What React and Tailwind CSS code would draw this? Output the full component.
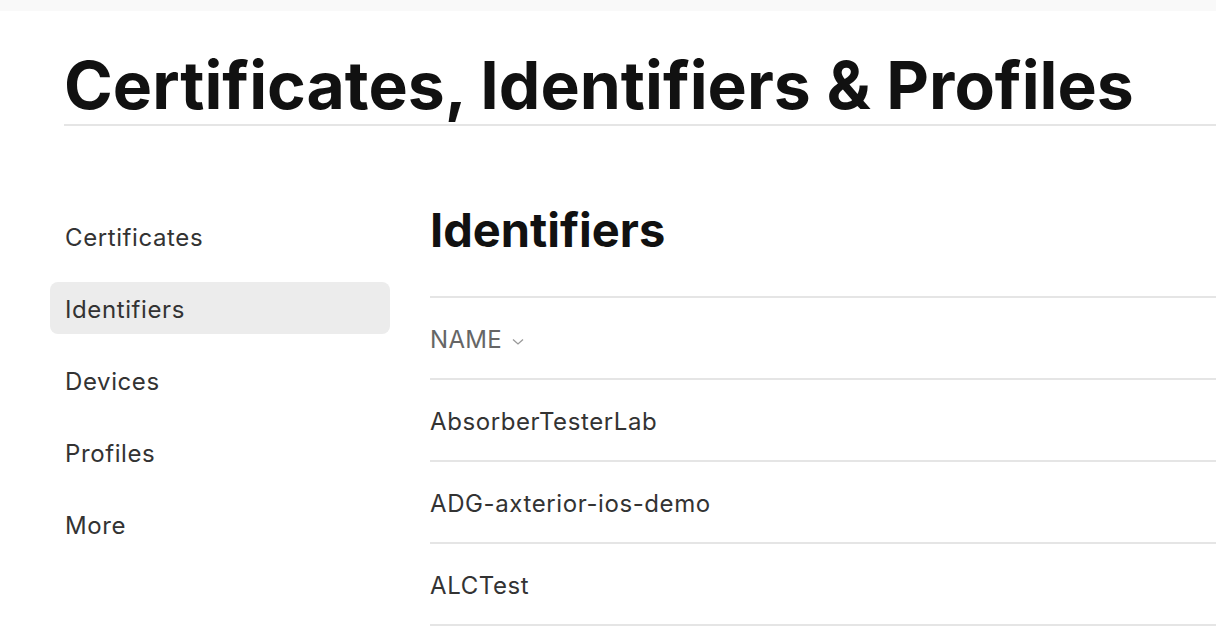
export default function App() {
  const items = ["Certificates", "Identifiers", "Devices", "Profiles", "More"];
  const rows = ["AbsorberTesterLab", "ADG-axterior-ios-demo", "ALCTest"];
  return (
    <div className="w-[1216px] h-[630px] overflow-hidden bg-white" style={{ fontFamily: "Inter, 'Noto Sans', sans-serif" }}>
      <div className="h-[11px] bg-[#f9f9f9]" />
      <div className="pl-[64px]">
        <h1 className="pt-[36px] text-[66px] leading-[76px] font-bold text-[#111] tracking-[0px] whitespace-nowrap">
          Certificates, Identifiers &amp; Profiles
        </h1>
        <div className="h-[2px] bg-[#e5e5e5] mt-[1px]" />
      </div>
      <div className="flex mt-[84px]">
        <nav className="w-[340px] ml-[50px] flex flex-col gap-[20px] shrink-0">
          {items.map((it) => (
            <div
              key={it}
              className={`h-[52px] rounded-[8px] px-[15px] pt-[4px] flex items-center text-[24px] tracking-[0.6px] text-[#333] ${it === "Identifiers" ? "bg-[#ececec]" : ""}`}
            >
              {it}
            </div>
          ))}
        </nav>
        <main className="ml-[40px] flex-1 -mt-[10px]">
          <h2 className="text-[47px] leading-[60px] font-bold text-[#111] tracking-[0px]">Identifiers</h2>
          <div className="mt-[36px] h-[2px] bg-[#e5e5e5]" />
          <div className="h-[80px] pt-[4px] flex items-center gap-[10px] text-[24px] tracking-[0.3px] text-[#666]">
            <span>NAME</span>
            <svg width="12" height="8" viewBox="0 0 12 8" className="mt-[3px]">
              <path d="M1 1.5 L6 6 L11 1.5" fill="none" stroke="#999" strokeWidth="1.3" />
            </svg>
          </div>
          {rows.map((r) => (
            <div key={r}>
              <div className="h-[2px] bg-[#e5e5e5]" />
              <div className="h-[80px] pt-[4px] flex items-center text-[24px] tracking-[0.6px] text-[#333]">{r}</div>
            </div>
          ))}
          <div className="h-[2px] bg-[#e5e5e5]" />
        </main>
      </div>
    </div>
  );
}
